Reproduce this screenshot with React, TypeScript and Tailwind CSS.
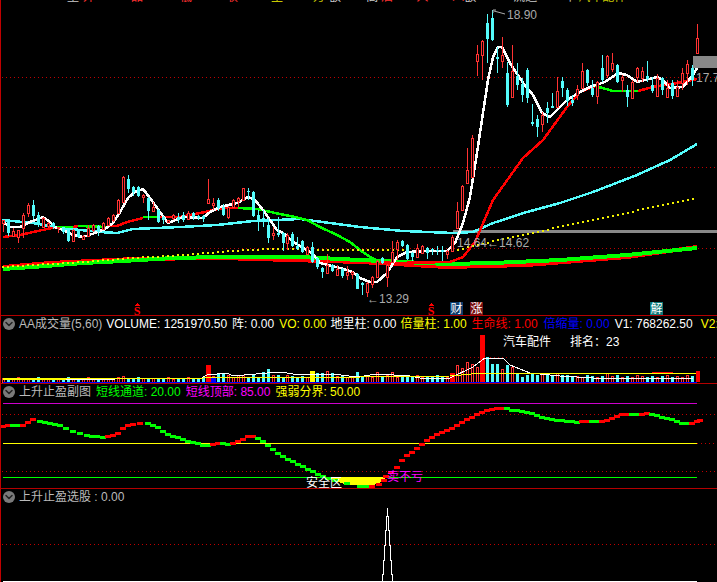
import React from "react";
import { ChevronDown } from "lucide-react";

type Candle = [number, number, number, number, number, "r" | "c"];
type Pt = [number, number];

const RED = "#ff3232";
const CYAN = "#54fcfc";
const LIME = "#00ff00";

// x, body top, body bottom, high, low, colour
const CANDLES: Candle[] = [
  [3, 220, 223, 220, 232, "r"], [8, 222, 233, 222, 236, "c"], [13, 231, 236, 228, 237, "r"], [18, 230, 237, 230, 243, "r"],
  [23, 215, 228, 213, 238, "r"], [28, 205, 213, 203, 217, "r"], [33, 205, 216, 200, 219, "c"], [38, 215, 223, 212, 227, "c"],
  [43, 218, 227, 217, 228, "r"], [48, 223, 226, 222, 228, "r"], [53, 223, 227, 222, 229, "c"], [58, 227, 228, 227, 233, "r"],
  [63, 227, 232, 227, 234, "c"], [68, 230, 241, 229, 242, "c"], [73, 230, 241, 229, 242, "r"], [78, 230, 237, 229, 238, "c"],
  [83, 236, 239, 235, 240, "r"], [88, 228, 236, 225, 237, "r"], [93, 225, 230, 224, 232, "r"], [98, 226, 232, 225, 236, "c"],
  [103, 223, 229, 222, 230, "r"], [108, 218, 225, 217, 226, "r"], [113, 215, 220, 214, 222, "r"], [118, 200, 213, 199, 214, "r"],
  [123, 177, 202, 176, 203, "r"], [128, 179, 189, 175, 193, "c"], [133, 187, 192, 186, 196, "c"], [138, 187, 196, 186, 197, "c"],
  [143, 195, 197, 194, 203, "r"], [148, 198, 211, 197, 220, "c"], [153, 207, 211, 202, 212, "r"], [158, 210, 222, 209, 223, "c"],
  [163, 217, 220, 216, 224, "c"], [168, 220, 222, 220, 223, "r"], [173, 215, 218, 214, 220, "r"], [178, 217, 220, 213, 223, "c"],
  [183, 215, 220, 212, 222, "c"], [188, 213, 219, 211, 220, "r"], [193, 213, 217, 212, 220, "c"], [198, 216, 218, 215, 220, "c"],
  [203, 216, 219, 215, 222, "c"], [208, 199, 203, 179, 204, "r"], [213, 203, 205, 198, 210, "r"], [218, 200, 208, 198, 211, "c"],
  [223, 207, 215, 204, 216, "c"], [228, 207, 217, 206, 219, "r"], [233, 200, 207, 199, 208, "r"], [238, 198, 201, 197, 207, "r"],
  [243, 188, 200, 188, 201, "r"], [248, 191, 192, 188, 200, "c"], [253, 192, 216, 191, 217, "c"], [258, 215, 220, 210, 231, "c"],
  [263, 218, 220, 210, 227, "c"], [268, 225, 238, 218, 243, "c"], [273, 233, 235, 227, 240, "r"], [278, 233, 235, 217, 237, "c"],
  [283, 233, 243, 232, 251, "c"], [287, 235, 243, 233, 250, "r"], [292, 234, 246, 232, 247, "c"], [297, 246, 249, 237, 250, "c"],
  [302, 241, 252, 240, 253, "c"], [307, 247, 254, 246, 255, "r"], [312, 247, 262, 242, 263, "c"], [317, 258, 267, 257, 269, "c"],
  [322, 268, 272, 267, 278, "c"], [327, 265, 273, 254, 274, "r"], [332, 265, 271, 264, 272, "c"], [337, 269, 275, 265, 276, "r"],
  [342, 269, 276, 268, 278, "c"], [347, 272, 275, 266, 280, "r"], [352, 272, 274, 271, 279, "r"], [357, 274, 289, 273, 289, "c"],
  [362, 283, 285, 282, 295, "c"], [367, 283, 292, 282, 297, "r"], [372, 277, 284, 276, 288, "r"], [377, 261, 277, 260, 278, "r"],
  [382, 258, 263, 257, 264, "c"], [387, 265, 277, 264, 287, "r"], [392, 252, 262, 241, 263, "r"], [397, 242, 249, 240, 260, "r"],
  [402, 241, 246, 240, 247, "c"], [407, 245, 259, 244, 260, "c"], [412, 253, 257, 252, 261, "c"], [417, 248, 257, 244, 258, "r"],
  [422, 246, 253, 245, 254, "r"], [427, 248, 253, 247, 259, "c"], [432, 249, 250, 248, 255, "c"], [437, 250, 251, 246, 255, "c"],
  [442, 250, 252, 246, 261, "c"], [447, 251, 254, 250, 259, "r"], [452, 237, 251, 235, 252, "r"], [457, 211, 228, 202, 229, "r"],
  [462, 186, 210, 185, 211, "r"], [467, 170, 183, 148, 184, "r"], [472, 138, 177, 135, 178, "r"], [477, 54, 61, 45, 76, "r"],
  [482, 41, 55, 40, 80, "r"], [487, 23, 39, 14, 63, "c"], [492, 18, 40, 10, 41, "c"], [497, 57, 59, 47, 73, "c"],
  [502, 55, 61, 37, 68, "r"], [507, 73, 105, 62, 107, "c"], [512, 71, 97, 45, 98, "r"], [517, 76, 85, 63, 90, "c"],
  [522, 84, 95, 78, 102, "c"], [527, 70, 98, 68, 103, "c"], [532, 122, 124, 104, 126, "c"], [537, 119, 127, 115, 137, "c"],
  [542, 115, 124, 112, 132, "r"], [547, 108, 113, 102, 123, "c"], [552, 106, 108, 93, 107, "c"], [557, 91, 107, 77, 108, "r"],
  [562, 81, 88, 77, 97, "c"], [567, 90, 101, 88, 106, "c"], [572, 100, 103, 95, 106, "c"], [577, 89, 95, 85, 100, "r"],
  [582, 71, 88, 63, 89, "r"], [587, 70, 83, 69, 86, "c"], [592, 88, 95, 80, 97, "c"], [597, 82, 96, 81, 104, "r"],
  [602, 68, 80, 55, 82, "c"], [607, 56, 75, 55, 78, "r"], [612, 63, 69, 53, 72, "r"], [617, 65, 82, 64, 83, "c"],
  [622, 77, 80, 75, 92, "r"], [627, 90, 97, 85, 107, "c"], [632, 82, 98, 80, 99, "r"], [637, 68, 77, 67, 82, "r"],
  [642, 71, 78, 67, 82, "r"], [647, 76, 79, 61, 82, "c"], [652, 85, 91, 77, 93, "c"], [657, 78, 96, 74, 97, "r"],
  [662, 78, 90, 77, 95, "c"], [667, 88, 97, 80, 98, "r"], [672, 83, 96, 80, 99, "c"], [677, 87, 96, 80, 97, "r"],
  [682, 73, 83, 68, 90, "r"], [687, 64, 73, 60, 85, "r"], [692, 68, 80, 65, 86, "c"], [697, 38, 53, 24, 54, "r"],
];

const WHITE_MA: Pt[] = [
  [3, 222], [10, 227], [20, 227], [30, 222], [43, 217], [50, 222], [55, 227], [63, 230], [73, 235], [83, 237], [95, 233], [105, 229], [113, 223], [120, 212],
  [128, 198], [135, 192], [143, 189], [150, 198], [160, 212], [168, 223], [183, 217], [203, 218], [210, 212], [220, 207], [237, 203], [248, 197],
  [255, 200], [263, 210], [277, 230], [283, 233], [295, 243], [312, 253], [320, 263], [340, 268], [353, 272], [360, 278], [370, 282], [377, 282],
  [387, 273], [397, 257], [407, 252], [427, 251], [447, 251], [455, 243], [463, 223], [470, 197], [477, 153], [483, 113], [488, 80], [493, 57],
  [498, 47], [502, 47], [510, 63], [523, 83], [533, 95], [542, 113], [550, 117], [557, 110], [567, 100], [580, 92], [590, 87], [605, 82], [618, 73],
  [627, 75], [637, 82], [657, 77], [663, 80], [670, 88], [683, 87], [693, 75], [697, 68],
];

const MA10_RED: Pt[][] = [
  [[3, 237], [20, 235], [33, 232], [57, 227]],
  [[73, 227], [78, 226]],
  [[108, 226], [117, 226], [127, 222], [143, 218]],
  [[158, 217], [180, 217], [200, 213], [223, 208], [238, 208]],
  [[380, 262], [393, 263], [450, 262], [463, 257], [475, 242], [493, 200], [523, 158], [543, 140], [567, 107], [580, 92], [595, 86]],
  [[638, 91], [653, 87], [677, 83], [697, 79]],
];

const MA10_GREEN: Pt[][] = [
  [[57, 227], [73, 227]],
  [[78, 226], [108, 227]],
  [[143, 217], [158, 217]],
  [[238, 208], [257, 209], [280, 214], [295, 217], [307, 220], [320, 227], [337, 235], [350, 242], [360, 250], [370, 257], [380, 262]],
  [[595, 86], [613, 91], [638, 91]],
];

const MA20: Pt[] = [
  [2, 220], [33, 223], [60, 228], [100, 232], [117, 233], [133, 229], [180, 227], [217, 225], [253, 221], [300, 219], [330, 223], [360, 227], [403, 231],
  [453, 233], [473, 232], [493, 223], [527, 212], [560, 203], [593, 192], [637, 175], [670, 160], [697, 144],
];

const DOTTED: Pt[] = [
  [3, 267], [33, 265], [83, 262], [133, 258], [183, 255], [233, 251], [267, 249], [360, 250], [453, 251], [477, 245], [527, 234], [593, 220], [697, 198],
];

const LONG_RED: Pt[] = [[3, 267], [50, 263], [133, 259], [220, 258], [360, 262], [447, 267], [527, 265], [627, 257], [697, 247]];
const LONG_GREEN: Pt[] = [[3, 269], [33, 267], [83, 263], [123, 261], [173, 258], [220, 257], [300, 257], [360, 260], [447, 264], [493, 263], [560, 260], [627, 255], [697, 248]];

// explicit bar heights for the volume pane, everything else follows the base pattern
const VOL: Record<number, number> = {
  123: 6, 218: 8, 223: 8, 228: 7, 243: 7, 253: 8, 263: 10, 268: 13, 273: 7, 278: 7, 287: 7, 317: 9, 322: 9, 327: 11, 332: 9, 337: 6,
  357: 10, 377: 10, 392: 10, 457: 17, 462: 14, 467: 20, 472: 18, 477: 15, 487: 25, 492: 18, 497: 18, 502: 13, 507: 17, 512: 15, 517: 9,
  522: 5, 527: 7, 532: 9, 537: 7, 542: 9, 547: 7, 552: 6, 557: 9, 562: 7, 607: 9,
};
const BASE = [4, 3, 4, 5, 3, 4, 3, 5, 4, 3];

const VOL_YELLOW: Pt[] = [[3, 378], [200, 379], [203, 378], [360, 377], [450, 376], [482, 373], [650, 373], [696, 374]];
const VOL_WHITE: Pt[] = [
  [3, 379], [115, 379], [120, 378], [170, 378], [202, 378], [207, 375], [217, 374], [227, 373], [233, 376], [267, 373], [280, 372], [300, 375], [333, 374], [357, 377],
  [377, 374], [410, 376], [420, 378], [450, 378], [473, 367], [485, 358], [503, 358], [510, 365], [530, 373], [560, 376], [593, 378], [693, 378],
];

type Step = [number, number, "r" | "g"];
const LADDER: Step[] = [
  [3, 426, "r"], [8, 425, "r"], [13, 425, "g"], [18, 425, "g"], [23, 425, "r"], [28, 422, "r"], [33, 419, "r"], [40, 421, "g"], [45, 422, "g"], [50, 423, "g"],
  [55, 424, "g"], [60, 425, "g"], [66, 428, "g"], [73, 431, "g"], [80, 433, "g"], [87, 435, "g"], [92, 436, "g"], [97, 436, "g"], [103, 437, "g"],
  [108, 436, "r"], [113, 435, "r"], [118, 433, "r"], [123, 428, "r"], [128, 425, "r"], [133, 424, "r"], [140, 423, "r"], [148, 423, "g"], [153, 425, "g"],
  [158, 427, "g"], [163, 431, "g"], [168, 434, "g"], [173, 436, "g"], [178, 437, "g"], [183, 439, "g"], [188, 441, "g"], [193, 442, "g"], [198, 443, "g"],
  [203, 445, "g"], [208, 445, "g"], [213, 444, "r"], [218, 443, "r"], [223, 443, "g"], [228, 444, "g"], [233, 443, "r"], [238, 441, "r"], [243, 439, "r"],
  [248, 436, "r"], [253, 436, "r"], [258, 438, "g"], [263, 441, "g"], [268, 445, "g"], [273, 449, "g"], [278, 453, "g"], [283, 456, "g"], [288, 459, "g"],
  [293, 461, "g"], [298, 464, "g"], [303, 466, "g"], [308, 469, "g"], [313, 471, "g"], [318, 474, "g"], [323, 476, "g"], [328, 478, "g"], [335, 480, "g"],
  [347, 483, "g"], [360, 486, "g"], [366, 486, "g"], [372, 486, "r"], [379, 484, "r"], [384, 480, "r"], [386, 476, "r"], [391, 472, "r"], [397, 467, "r"],
  [402, 460, "r"], [407, 455, "r"], [412, 452, "r"], [417, 448, "r"], [422, 444, "r"], [427, 440, "r"], [432, 437, "r"], [437, 434, "r"], [442, 432, "r"],
  [447, 430, "r"], [452, 428, "r"], [457, 425, "r"], [462, 422, "r"], [467, 419, "r"], [472, 417, "r"], [477, 414, "r"], [482, 412, "r"], [487, 410, "r"],
  [492, 409, "r"], [497, 408, "r"], [503, 408, "r"], [507, 408, "g"], [512, 410, "g"], [517, 410, "g"], [522, 411, "g"], [527, 412, "g"], [532, 413, "g"],
  [537, 415, "g"], [542, 417, "g"], [547, 418, "g"], [552, 419, "g"], [557, 420, "g"], [562, 420, "g"], [567, 421, "g"], [572, 421, "g"], [577, 422, "g"],
  [582, 421, "r"], [587, 421, "r"], [592, 421, "g"], [597, 421, "g"], [602, 421, "r"], [607, 420, "r"], [612, 418, "r"], [617, 416, "r"], [622, 414, "r"],
  [627, 414, "r"], [632, 414, "g"], [637, 414, "g"], [642, 414, "r"], [647, 413, "r"], [652, 414, "g"], [657, 415, "g"], [662, 417, "g"], [667, 418, "g"],
  [672, 419, "g"], [677, 421, "g"], [682, 423, "g"], [687, 423, "g"], [692, 423, "r"], [697, 421, "r"], [700, 420, "r"],
];

const TOP_BITS = [
  { text: "量", cls: "ml-[66px] text-[#ccc]" },
  { text: "外", cls: "ml-[4px] text-[#ff3232]" },
  { text: "品", cls: "ml-[36px] text-[#ff3232]" },
  { text: "低", cls: "ml-[37px] text-[#ff3232]" },
  { text: "收", cls: "ml-[34px] text-[#ff3232]" },
  { text: "主", cls: "ml-[33px] text-[#c8c800]" },
  { text: "万", cls: "ml-[30px] text-[#c8c800]" },
  { text: "额", cls: "ml-[4px] text-[#ccc]" },
  { text: "高", cls: "ml-[25px] text-[#ccc]" },
  { text: "后", cls: "ml-[3px] text-[#ff3232]" },
  { text: "入", cls: "ml-[23px] text-[#ff3232]" },
  { text: "八", cls: "ml-[24px] text-[#ff3232]" },
  { text: "额", cls: "ml-[0px] text-[#ccc]" },
  { text: "流通", cls: "ml-[37px] text-[#ccc]" },
  { text: "市", cls: "ml-[27px] text-[#ccc]" },
  { text: "汽车配件", cls: "ml-[2px] text-[#c8c800]" },
];

const pts = (p: Pt[]) => p.map(([x, y]) => `${x},${y}`).join(" ");

function dots(line: Pt[]) {
  const out: Pt[] = [];
  for (let x = line[0][0]; x < line[line.length - 1][0]; x += 5) {
    const i = line.findIndex((p, n) => n < line.length - 1 && x >= p[0] && x < line[n + 1][0]);
    const [x0, y0] = line[i];
    const [x1, y1] = line[i + 1];
    out.push([x, Math.round(y0 + ((y1 - y0) * (x - x0)) / (x1 - x0))]);
  }
  return out;
}

function GridLine({ y, x = 2 }: { y: number; x?: number }) {
  return <line x1={x} x2={717} y1={y + 0.5} y2={y + 0.5} stroke="#c00000" strokeDasharray="1 3" />;
}

function Marker({ x, y }: { x: number; y: number }) {
  return (
    <g>
      <polygon points={`${x},${y} ${x + 3},${y + 3} ${x - 3},${y + 3}`} fill="#ff0000" />
      <text x={x} y={y + 12} textAnchor="middle" fontSize="12" fontWeight="bold" fill="#ff0000" fontFamily="'Liberation Serif', serif">S</text>
    </g>
  );
}

function Tag({ x, bg, label }: { x: number; bg: string; label: string }) {
  return (
    <g>
      <rect x={x} y={302} width={13} height={13} fill={bg} />
      <text x={x + 0.5} y={313} fontSize="12" fill="#fff">{label}</text>
    </g>
  );
}

function Collapse() {
  return (
    <span className="w-3 h-3 rounded-full bg-[#7a7a7a] flex items-center justify-center shrink-0">
      <ChevronDown className="w-3 h-3 text-[#222]" strokeWidth={3} />
    </span>
  );
}

function PaneHead({ children }: { children: React.ReactNode }) {
  return (
    <div className="h-[16px] shrink-0 pl-[2px] flex items-center text-[12px] leading-none whitespace-nowrap overflow-hidden">
      <Collapse />
      {children}
    </div>
  );
}

function MainChart() {
  return (
    <svg viewBox="1 3 716 312" className="block w-[716px] h-[312px]" shapeRendering="crispEdges">
      <GridLine y={77} />
      <GridLine y={167} />
      <GridLine y={248} />
      <rect x={453} y={230} width={264} height={3} fill="#888" />
      <polyline points={pts(LONG_RED)} fill="none" stroke="#ff0000" strokeWidth={4} />
      <polyline points={pts(LONG_GREEN)} fill="none" stroke={LIME} strokeWidth={4} />
      <polyline points={pts(MA20)} fill="none" stroke={CYAN} strokeWidth={2.5} />
      {MA10_RED.map((s, i) => (
        <polyline key={i} points={pts(s)} fill="none" stroke="#ff0000" strokeWidth={2.5} />
      ))}
      {MA10_GREEN.map((s, i) => (
        <polyline key={i} points={pts(s)} fill="none" stroke={LIME} strokeWidth={2.5} />
      ))}
      {dots(DOTTED).map(([x, y], i) => (
        <rect key={i} x={x - 1} y={y - 1} width={2} height={2} fill="#f0f000" />
      ))}
      <polyline points={pts(WHITE_MA)} fill="none" stroke="#fff" strokeWidth={2.5} />
      {CANDLES.map(([x, top, bottom, high, low, c]) =>
        c === "c" ? (
          <g key={x}>
            <rect x={x} y={high} width={1} height={low - high} fill={CYAN} />
            <rect x={x - 1} y={top} width={3} height={Math.max(bottom - top, 1)} fill={CYAN} />
          </g>
        ) : (
          <g key={x}>
            <rect x={x} y={high} width={1} height={low - high} fill={RED} />
            <rect x={x - 0.5} y={top + 0.5} width={2} height={Math.max(bottom - top, 1)} fill="#000" stroke={RED} />
          </g>
        ),
      )}
      <rect x={693} y={56} width={24} height={12} fill="#888" />
      <g fontSize="12" fill="#aaa" shapeRendering="auto">
        <path d="M493 10v3M493 10h3M494 11l11 3" stroke="#aaa" fill="none" />
        <text x={507} y={19}>18.90</text>
        <text x={457} y={247}>14.64←14.62</text>
        <text x={367} y={303}>←13.29</text>
        <text x={696} y={82}>17.7</text>
      </g>
      <Marker x={137} y={303} />
      <Marker x={431} y={303} />
      <Tag x={450} bg="#0c3c6c" label="财" />
      <Tag x={470} bg="#781010" label="涨" />
      <Tag x={650} bg="#0c7878" label="解" />
    </svg>
  );
}

function VolumeChart() {
  return (
    <svg viewBox="1 332 716 51" className="block w-[716px] h-[51px]" shapeRendering="crispEdges">
      <GridLine y={357} />
      {CANDLES.slice(0, -1).map(([x, , , , , c], i) => {
        const h = VOL[x] ?? (x < 205 ? BASE[i % 10] : BASE[i % 10] + 2);
        return c === "c" ? (
          <rect key={x} x={x - 1} y={382 - h} width={3} height={h} fill={CYAN} />
        ) : (
          <rect key={x} x={x - 0.5} y={382.5 - h} width={2} height={h} fill="#000" stroke={RED} />
        );
      })}
      <rect x={206} y={365} width={5} height={17} fill="#ff0000" />
      <rect x={211} y={377} width={5} height={5} fill="#0000ff" />
      <rect x={310} y={371} width={5} height={11} fill="#ffff00" />
      <rect x={450} y={373} width={5} height={9} fill="#ff0000" />
      <rect x={480} y={335} width={5} height={47} fill="#ff0000" />
      <rect x={696} y={371} width={4} height={11} fill="#ff0000" />
      <rect x={652} y={372} width={21} height={2} fill="#ff0000" />
      <polyline points={pts(VOL_WHITE)} fill="none" stroke="#fff" />
      <polyline points={pts(VOL_YELLOW)} fill="none" stroke="#ffff00" />
      <rect x={3} y={378} width={63} height={2} fill="#ffff00" />
      <rect x={3} y={382} width={694} height={1} fill="#0000ff" />
      <g fontSize="12" fill="#fff" shapeRendering="auto">
        <text x={503} y={346}>汽车配件</text>
        <text x={570} y={346}>排名：23</text>
      </g>
    </svg>
  );
}

function SignalChart() {
  return (
    <svg viewBox="1 402 716 86" className="block w-[716px] h-[86px]" shapeRendering="crispEdges">
      <rect x={3} y={403} width={694} height={1} fill="#cc00cc" />
      <GridLine y={414} />
      <GridLine y={471} />
      <GridLine y={443} x={697} />
      <rect x={3} y={443} width={694} height={1} fill="#ffff00" />
      <rect x={3} y={477} width={694} height={1} fill={LIME} />
      <polygon points="328,477 387,477 379,483 372,486 347,485 335,481" fill="#ffff00" />
      {LADDER.map(([x, y, c], i) => (
        <rect key={i} x={x - 3} y={y - 1} width={6} height={3} fill={c === "r" ? "#ff0000" : LIME} />
      ))}
      <g fontSize="12" shapeRendering="auto">
        <text x={306} y={487} fill="#fff">安全区</text>
        <text x={387} y={481} fill="#ff00ff">卖不亏</text>
      </g>
    </svg>
  );
}

function PickChart() {
  return (
    <svg viewBox="1 505 716 77" className="block w-[716px] h-[77px]" shapeRendering="crispEdges">
      <GridLine y={544} />
      <path
        d="M382.5 581V574H383.5V560H384.5V545H385.5V530H386.5V516H387.5V508H387.5V516H388.5V530H389.5V545H390.5V560H391.5V574H392.5V581"
        fill="none"
        stroke="#fff"
      />
      <rect x={3} y={581} width={694} height={1} fill="#fff" />
    </svg>
  );
}

export default function App() {
  return (
    <div
      className="w-[717px] h-[582px] overflow-hidden bg-black border-l border-[#c00000] flex flex-col"
      style={{ fontFamily: "'Liberation Sans', 'Noto Sans CJK SC', sans-serif" }}
    >
      <div className="h-[316px] shrink-0 border-b border-[#b40000]">
        <div className="h-[3px] overflow-hidden flex text-[12px] leading-[12px] whitespace-nowrap">
          {TOP_BITS.map((b, i) => (
            <span key={i} className={`${b.cls} -mt-[9px]`}>{b.text}</span>
          ))}
        </div>
        <MainChart />
      </div>

      <div className="h-[68px] shrink-0 border-b border-[#b40000]">
        <PaneHead>
          <span className="ml-[4px] text-[#bbb]">AA成交量(5,60)</span>
          <span className="ml-[4px] text-white">VOLUME: 1251970.50</span>
          <span className="ml-[5px] text-white">阵: 0.00</span>
          <span className="ml-[5px] text-[#ffff00]">VO: 0.00</span>
          <span className="ml-[4px] text-white">地里柱: 0.00</span>
          <span className="ml-[4px] text-[#ffff00]">倍量柱: 1.00</span>
          <span className="ml-[5px] text-[#ff0000]">生命线: 1.00</span>
          <span className="ml-[6px] text-[#0000ff]">倍缩量: 0.00</span>
          <span className="ml-[5px] text-white">V1: 768262.50</span>
          <span className="ml-[8px] text-[#ffff00]">V2: 0.00</span>
        </PaneHead>
        <VolumeChart />
      </div>

      <div className="h-[105px] shrink-0 border-b border-[#b40000]">
        <div className="h-[18px] flex flex-col">
          <PaneHead>
            <span className="ml-[4px] text-[#bbb]">上升止盈副图</span>
            <span className="ml-[5px] text-[#00ff00]">短线通道: 20.00</span>
            <span className="ml-[5px] text-[#ff00ff]">短线顶部: 85.00</span>
            <span className="ml-[5px] text-[#ffff00]">强弱分界: 50.00</span>
          </PaneHead>
        </div>
        <SignalChart />
      </div>

      <div className="flex-1 min-h-0">
        <PaneHead>
          <span className="ml-[4px] text-[#bbb]">上升止盈选股 : 0.00</span>
        </PaneHead>
        <PickChart />
      </div>
    </div>
  );
}
